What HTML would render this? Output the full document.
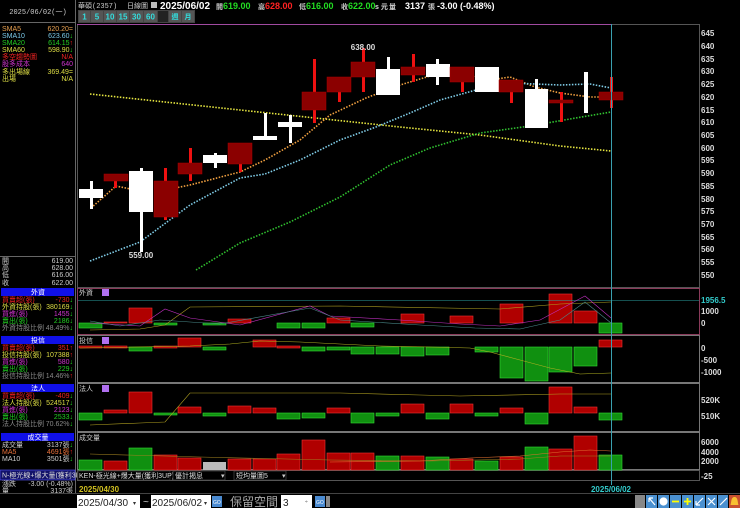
<!DOCTYPE html>
<html><head><meta charset="utf-8"><style>
html,body{margin:0;padding:0;background:#000;width:740px;height:508px;overflow:hidden}
svg{display:block}
text{font-family:"Liberation Sans","Noto Sans CJK TC",sans-serif}
.s{font-size:7px}
.m{font-family:"Liberation Mono","Noto Sans CJK TC",monospace;font-size:7px}
.ax{font-family:"DejaVu Sans","Liberation Sans",sans-serif;font-size:8px;fill:#ddd;font-weight:bold}
</style></head><body>
<svg width="740" height="508" viewBox="0 0 740 508" xmlns="http://www.w3.org/2000/svg">
<rect width="740" height="508" fill="#000"/>
<!-- left panel separators -->
<line x1="75.5" y1="0" x2="75.5" y2="493" stroke="#666"/>
<line x1="0" y1="22.5" x2="75" y2="22.5" stroke="#666"/>
<text x="38" y="14" class="m" fill="#ccc" text-anchor="middle">2025/06/02(一)</text>
<!-- SMA list -->
<g class="m">
<text x="2" y="31" fill="#e8a050">SMA5</text><text x="73" y="31" fill="#e8a050" text-anchor="end">620.20=</text>
<text x="2" y="38" fill="#7ac8e8">SMA10</text><text x="73" y="38" fill="#7ac8e8" text-anchor="end">623.60<tspan fill="#2d2">↓</tspan></text>
<text x="2" y="45" fill="#2c2">SMA20</text><text x="73" y="45" fill="#2c2" text-anchor="end">614.15<tspan fill="#e22">↑</tspan></text>
<text x="2" y="52" fill="#dd4">SMA60</text><text x="73" y="52" fill="#dd4" text-anchor="end">598.90<tspan fill="#2d2">↓</tspan></text>
<text x="2" y="59" fill="#e22">多空趨勢圖</text><text x="73" y="59" fill="#e22" text-anchor="end">N/A</text>
<text x="2" y="66" fill="#c3c">股多成本</text><text x="73" y="66" fill="#c3c" text-anchor="end">640</text>
<text x="2" y="74" fill="#dd4">多出場線</text><text x="73" y="74" fill="#dd4" text-anchor="end">369.49=</text>
<text x="2" y="81" fill="#dd4">出場</text><text x="73" y="81" fill="#dd4" text-anchor="end">N/A</text>
</g>
<line x1="0" y1="256.5" x2="75" y2="256.5" stroke="#666"/>
<g class="m" fill="#ccc">
<text x="2" y="263">開</text><text x="73" y="263" text-anchor="end">619.00</text>
<text x="2" y="270">高</text><text x="73" y="270" text-anchor="end">628.00</text>
<text x="2" y="277">低</text><text x="73" y="277" text-anchor="end">616.00</text>
<text x="2" y="285">收</text><text x="73" y="285" text-anchor="end">622.00</text>
</g>
<!-- left panel sections -->
<g class="m">
<rect x="1" y="288" width="73" height="8" fill="#1010e8"/><text x="38" y="294.5" fill="#fff" text-anchor="middle">外資</text>
<text x="2" y="302" fill="#e22">買賣超(張)</text><text x="73" y="302" fill="#e22" text-anchor="end">-730<tspan fill="#2d2">↓</tspan></text>
<text x="2" y="309" fill="#dd4">外資持股(張)</text><text x="73" y="309" fill="#dd4" text-anchor="end">380169<tspan fill="#2d2">↓</tspan></text>
<text x="2" y="316" fill="#c3c">買進(張)</text><text x="73" y="316" fill="#c3c" text-anchor="end">1455<tspan fill="#2d2">↓</tspan></text>
<text x="2" y="323" fill="#2c2">賣出(張)</text><text x="73" y="323" fill="#2c2" text-anchor="end">2186<tspan fill="#2d2">↓</tspan></text>
<text x="2" y="330" fill="#888">外資持股比例</text><text x="73" y="330" fill="#888" text-anchor="end">48.49%<tspan fill="#2d2">↓</tspan></text>
<rect x="1" y="336" width="73" height="8" fill="#1010e8"/><text x="38" y="342.5" fill="#fff" text-anchor="middle">投信</text>
<text x="2" y="350" fill="#e22">買賣超(張)</text><text x="73" y="350" fill="#e22" text-anchor="end">351<tspan fill="#e22">↑</tspan></text>
<text x="2" y="357" fill="#dd4">投信持股(張)</text><text x="73" y="357" fill="#dd4" text-anchor="end">107388<tspan fill="#e22">↑</tspan></text>
<text x="2" y="364" fill="#c3c">買進(張)</text><text x="73" y="364" fill="#c3c" text-anchor="end">580<tspan fill="#2d2">↓</tspan></text>
<text x="2" y="371" fill="#2c2">賣出(張)</text><text x="73" y="371" fill="#2c2" text-anchor="end">229<tspan fill="#2d2">↓</tspan></text>
<text x="2" y="378" fill="#888">投信持股比例</text><text x="73" y="378" fill="#888" text-anchor="end">14.46%<tspan fill="#e22">↑</tspan></text>
<rect x="1" y="384" width="73" height="8" fill="#1010e8"/><text x="38" y="390.5" fill="#fff" text-anchor="middle">法人</text>
<text x="2" y="398" fill="#e22">買賣超(張)</text><text x="73" y="398" fill="#e22" text-anchor="end">-409<tspan fill="#2d2">↓</tspan></text>
<text x="2" y="405" fill="#dd4">法人持股(張)</text><text x="73" y="405" fill="#dd4" text-anchor="end">524517<tspan fill="#2d2">↓</tspan></text>
<text x="2" y="412" fill="#c3c">買進(張)</text><text x="73" y="412" fill="#c3c" text-anchor="end">2123<tspan fill="#2d2">↓</tspan></text>
<text x="2" y="419" fill="#2c2">賣出(張)</text><text x="73" y="419" fill="#2c2" text-anchor="end">2533<tspan fill="#2d2">↓</tspan></text>
<text x="2" y="426" fill="#888">法人持股比例</text><text x="73" y="426" fill="#888" text-anchor="end">70.62%<tspan fill="#2d2">↓</tspan></text>
<rect x="1" y="433" width="73" height="8" fill="#1010e8"/><text x="38" y="439.5" fill="#fff" text-anchor="middle">成交量</text>
<text x="2" y="447" fill="#ccc">成交量</text><text x="73" y="447" fill="#ccc" text-anchor="end">3137張<tspan fill="#2d2">↓</tspan></text>
<text x="2" y="454" fill="#e8703a">MA5</text><text x="73" y="454" fill="#e8703a" text-anchor="end">4691張<tspan fill="#e22">↑</tspan></text>
<text x="2" y="461" fill="#ccc">MA10</text><text x="73" y="461" fill="#ccc" text-anchor="end">3501張<tspan fill="#2d2">↓</tspan></text>
<rect x="0" y="470" width="75" height="10" fill="#12126a" stroke="#5a5aff" stroke-width="0.6"/><text x="2" y="477.5" fill="#ddd">N-極光線+爆大量(獲利3D)</text>
<text x="2" y="486" fill="#ccc">漲跌</text><text x="73" y="486" fill="#ccc" text-anchor="end">-3.00 (-0.48%)</text>
<text x="2" y="493" fill="#ccc">量</text><text x="73" y="493" fill="#ccc" text-anchor="end">3137張</text>
</g>
<!-- header -->
<g>
<text x="78" y="8" class="m" fill="#ccc">華碩(2357)</text>
<text x="127" y="8" class="m" fill="#ccc">日線圖</text>
<rect x="151" y="2" width="6" height="6" fill="#bbb"/>
<text x="160" y="9" fill="#fff" font-size="10" font-weight="bold">2025/06/02</text>
<g font-size="9" font-weight="bold">
<text x="216" y="9" class="m" fill="#ccc">開</text><text x="223" y="9" fill="#2d2">619.00</text>
<text x="258" y="9" class="m" fill="#ccc">高</text><text x="265" y="9" fill="#f22">628.00</text>
<text x="299" y="9" class="m" fill="#ccc">低</text><text x="306" y="9" fill="#2d2">616.00</text>
<text x="341" y="9" class="m" fill="#ccc">收</text><text x="348" y="9" fill="#2d2">622.00</text>
<text x="375" y="9" fill="#ddd" font-size="7">s 元</text>
<text x="389" y="9" class="m" fill="#ccc">量</text><text x="405" y="9" fill="#fff">3137</text>
<text x="428" y="9" class="m" fill="#ccc">張</text><text x="437" y="9" fill="#fff">-3.00 (-0.48%)</text>
</g>
</g>
<!-- toolbar -->
<rect x="78" y="10" width="117" height="13" fill="#444"/>
<g font-size="8" fill="#3dd" font-weight="bold" text-anchor="middle">
<rect x="79" y="11" width="11" height="11" fill="#555"/><text x="84.5" y="19.5">1</text>
<rect x="91" y="11" width="12" height="11" fill="#555"/><text x="97" y="19.5">5</text>
<rect x="104" y="11" width="12" height="11" fill="#555"/><text x="110" y="19.5">10</text>
<rect x="117" y="11" width="12" height="11" fill="#555"/><text x="123" y="19.5">15</text>
<rect x="130" y="11" width="13" height="11" fill="#555"/><text x="136.5" y="19.5">30</text>
<rect x="144" y="11" width="13" height="11" fill="#555"/><text x="150.5" y="19.5">60</text>
<rect x="158" y="11" width="10" height="11" fill="#222"/>
<rect x="169" y="11" width="12" height="11" fill="#555"/><text x="175" y="19" font-size="6" class="m">週</text>
<rect x="182" y="11" width="12" height="11" fill="#555"/><text x="188" y="19" font-size="6" class="m">月</text>
</g>
<!-- main chart frame -->
<rect x="77.5" y="24.5" width="622" height="263" fill="none" stroke="#555"/>
<line x1="77" y1="24.5" x2="611" y2="24.5" stroke="#a04aa0"/>
<!-- axis labels -->
<g class="ax">
<text x="701" y="36">645</text><text x="701" y="49">640</text><text x="701" y="62">635</text><text x="701" y="74">630</text>
<text x="701" y="87">625</text><text x="701" y="100">620</text><text x="701" y="113">615</text><text x="701" y="125">610</text>
<text x="701" y="138">605</text><text x="701" y="151">600</text><text x="701" y="163">595</text><text x="701" y="176">590</text>
<text x="701" y="189">585</text><text x="701" y="202">580</text><text x="701" y="214">575</text><text x="701" y="227">570</text>
<text x="701" y="240">565</text><text x="701" y="252">560</text><text x="701" y="265">555</text><text x="701" y="278">550</text>
</g>
<!-- MA lines -->
<g fill="none" stroke-width="1.6" stroke-dasharray="1.5 1.5">
<polyline stroke="#e6e640" points="90,94 240,110 400,127 480,135 560,146 611,151"/>
<polyline stroke="#f0a040" points="91,208 116,186 140,191 165,190 190,185 240,172 265,160 300,140 330,115 366,98 400,85 430,76 462,73 490,80 510,77 535,87 560,93 590,97 611,97"/>
<polyline stroke="#80cde8" points="90,261 140,242 190,205 240,178 265,174 300,160 340,140 376,127 410,113 440,100 476,90 510,83 560,85 590,84 611,88"/>
<polyline stroke="#30c030" points="196,270 240,243 290,222 340,197 390,165 430,148 480,133 530,126 570,119 611,112"/>
</g>
<!-- candles -->
<g>
<!-- white -->
<g fill="#fff">
<rect x="90" y="181" width="3" height="28"/><rect x="79" y="189" width="24" height="9"/>
<rect x="140" y="168" width="3" height="84"/><rect x="129" y="171" width="24" height="41"/>
<rect x="214" y="153" width="3" height="15"/><rect x="203" y="155" width="24" height="8"/>
<rect x="264" y="113" width="3" height="27"/><rect x="253" y="136" width="24" height="4"/>
<rect x="289" y="115" width="3" height="28"/><rect x="278" y="122" width="24" height="5"/>
<rect x="387" y="57" width="3" height="38"/><rect x="376" y="69" width="24" height="26"/>
<rect x="436" y="59" width="3" height="26"/><rect x="426" y="64" width="24" height="13"/>
<rect x="475" y="67" width="24" height="25"/>
<rect x="535" y="79" width="3" height="12"/><rect x="525" y="89" width="23" height="39"/>
<rect x="584" y="72" width="4" height="41"/>
</g>
<g fill="#ee1111">
<rect x="114" y="174" width="3" height="14"/>
<rect x="164" y="168" width="3" height="52"/>
<rect x="189" y="148" width="3" height="33"/>
<rect x="239" y="143" width="3" height="29"/>
<rect x="313" y="59" width="3" height="64"/>
<rect x="338" y="77" width="3" height="25"/>
<rect x="362" y="48" width="3" height="44"/>
<rect x="412" y="54" width="3" height="28"/>
<rect x="461" y="67" width="3" height="25"/>
<rect x="510" y="80" width="3" height="23"/>
<rect x="560" y="92" width="3" height="30"/>
<rect x="610" y="77" width="3" height="31"/>
</g>
<g fill="#8b0000" stroke="#a00" stroke-width="0.5">
<rect x="104" y="174" width="24" height="7"/>
<rect x="154" y="181" width="24" height="36"/>
<rect x="178" y="163" width="24" height="11"/>
<rect x="228" y="143" width="24" height="21"/>
<rect x="302" y="92" width="24" height="18"/>
<rect x="327" y="77" width="24" height="15"/>
<rect x="351" y="62" width="24" height="15"/>
<rect x="401" y="67" width="24" height="8"/>
<rect x="450" y="67" width="24" height="15"/>
<rect x="499" y="80" width="24" height="12"/>
<rect x="549" y="100" width="24" height="3"/>
<rect x="599" y="92" width="24" height="8"/>
</g>
<text x="363" y="50" text-anchor="middle" fill="#ddd" font-size="8" font-weight="bold">638.00</text>
<text x="141" y="258" text-anchor="middle" fill="#ddd" font-size="8" font-weight="bold">559.00</text>
</g>
<!-- sub panels frames -->
<g fill="none" stroke="#777">
<rect x="77.5" y="288.5" width="622" height="46" stroke="#8a3a5a"/>
<rect x="77.5" y="335.5" width="622" height="47"/>
<rect x="77.5" y="383.5" width="622" height="48"/>
<rect x="77.5" y="432.5" width="622" height="37"/>
<rect x="77.5" y="470.5" width="622" height="10" stroke="#555"/>
</g>
<g class="m" fill="#ccc">
<text x="79" y="295">外資</text><text x="79" y="343">投信</text><text x="79" y="391">法人</text><text x="79" y="440">成交量</text>
</g>
<g fill="#b070f0"><rect x="102" y="289" width="7" height="7"/><rect x="102" y="337" width="7" height="7"/><rect x="102" y="385" width="7" height="7"/></g>
<!-- panel 1 bars -->
<g stroke-width="0.6">
<g fill="#b00000" stroke="#e33">
<rect x="104" y="322" width="23" height="1"/><rect x="129" y="308" width="23" height="15"/><rect x="228" y="319" width="23" height="4"/>
<rect x="327" y="318" width="23" height="5"/><rect x="401" y="314" width="23" height="9"/><rect x="450" y="316" width="23" height="7"/>
<rect x="500" y="304" width="23" height="19"/><rect x="549" y="294" width="23" height="29"/><rect x="574" y="311" width="23" height="12"/>
</g>
<g fill="#109010" stroke="#3d3">
<rect x="79" y="323" width="23" height="5"/><rect x="154" y="323" width="23" height="2"/><rect x="203" y="323" width="23" height="2"/>
<rect x="277" y="323" width="23" height="5"/><rect x="302" y="323" width="23" height="5"/><rect x="351" y="323" width="23" height="4"/>
<rect x="599" y="323" width="23" height="10"/>
</g>
<line x1="78" y1="300.5" x2="699" y2="300.5" stroke="#2aa0a0"/>
<polyline fill="none" stroke="#b0a020" points="90,330 140,329 165,325 190,307 340,306 500,309 560,304 611,302"/>
<polyline fill="none" stroke="#c030c0" points="90,323 140,326 165,309 190,318 240,325 310,306 330,316 400,320 460,324 500,326 540,320 585,296 611,318"/>
<polyline fill="none" stroke="#4a8a8a" points="90,321 120,326 160,320 220,324 310,308 340,320 420,325 475,328 520,329 560,320 585,302 611,323"/>
</g>
<!-- panel 2 bars -->
<g stroke-width="0.6">
<g fill="#b00000" stroke="#e33">
<rect x="79" y="346" width="23" height="2"/><rect x="104" y="346" width="23" height="2"/><rect x="154" y="346" width="23" height="2"/>
<rect x="178" y="338" width="23" height="9"/><rect x="253" y="340" width="23" height="7"/><rect x="277" y="346" width="23" height="2"/>
<rect x="599" y="340" width="23" height="7"/>
</g>
<g fill="#109010" stroke="#3d3">
<rect x="129" y="347" width="23" height="4"/><rect x="203" y="347" width="23" height="3"/><rect x="302" y="347" width="23" height="4"/>
<rect x="327" y="347" width="23" height="3"/><rect x="351" y="347" width="23" height="7"/><rect x="376" y="347" width="23" height="7"/>
<rect x="401" y="347" width="23" height="9"/><rect x="426" y="347" width="23" height="8"/><rect x="475" y="347" width="23" height="5"/>
<rect x="500" y="347" width="23" height="31"/><rect x="525" y="347" width="23" height="34"/><rect x="549" y="347" width="23" height="25"/>
<rect x="574" y="347" width="23" height="19"/>
</g>
<polyline fill="none" stroke="#b0b020" points="80,348 190,346 230,344 260,341 300,342 340,344 380,346 430,347 470,348 490,352 520,360 550,368 580,374 611,373"/>
</g>
<!-- panel 3 bars -->
<g stroke-width="0.6">
<g fill="#b00000" stroke="#e33">
<rect x="104" y="410" width="23" height="3"/><rect x="129" y="392" width="23" height="21"/><rect x="178" y="407" width="23" height="6"/>
<rect x="228" y="406" width="23" height="7"/><rect x="253" y="408" width="23" height="5"/><rect x="327" y="408" width="23" height="5"/>
<rect x="401" y="404" width="23" height="9"/><rect x="450" y="404" width="23" height="9"/><rect x="500" y="408" width="23" height="5"/>
<rect x="549" y="387" width="23" height="26"/><rect x="574" y="407" width="23" height="6"/>
</g>
<g fill="#109010" stroke="#3d3">
<rect x="79" y="413" width="23" height="7"/><rect x="154" y="413" width="23" height="2"/><rect x="203" y="413" width="23" height="3"/>
<rect x="277" y="413" width="23" height="6"/><rect x="302" y="413" width="23" height="5"/><rect x="351" y="413" width="23" height="10"/>
<rect x="376" y="413" width="23" height="3"/><rect x="426" y="413" width="23" height="6"/><rect x="475" y="413" width="23" height="3"/>
<rect x="525" y="413" width="23" height="11"/><rect x="599" y="413" width="23" height="7"/>
</g>
<polyline fill="none" stroke="#b0a020" points="90,425 140,423 165,422 190,393 340,393 420,395 460,396 560,394 611,394"/>
</g>
<!-- volume bars -->
<g stroke-width="0.6">
<g fill="#b00000" stroke="#e33">
<rect x="104" y="461" width="23" height="9"/><rect x="154" y="455" width="23" height="15"/><rect x="178" y="458" width="23" height="12"/>
<rect x="228" y="459" width="23" height="11"/><rect x="253" y="459" width="23" height="11"/><rect x="277" y="454" width="23" height="16"/>
<rect x="302" y="440" width="23" height="30"/><rect x="327" y="453" width="23" height="17"/><rect x="351" y="453" width="23" height="17"/>
<rect x="401" y="456" width="23" height="14"/><rect x="450" y="459" width="23" height="11"/><rect x="500" y="457" width="23" height="13"/>
<rect x="549" y="449" width="23" height="21"/><rect x="574" y="436" width="23" height="34"/>
</g>
<g fill="#109010" stroke="#3d3">
<rect x="79" y="460" width="23" height="10"/><rect x="129" y="448" width="23" height="22"/><rect x="376" y="456" width="23" height="14"/>
<rect x="426" y="457" width="23" height="13"/><rect x="475" y="461" width="23" height="9"/><rect x="525" y="447" width="23" height="23"/>
<rect x="599" y="455" width="23" height="15"/>
</g>
<rect x="203" y="462" width="23" height="8" fill="#bbb"/>
<polyline fill="none" stroke="#a08020" points="90,454 200,457 330,460 430,461 520,459 560,456 611,456"/>
<polyline fill="none" stroke="#e07030" points="330,462 420,461 470,458 520,456 560,452 590,450 611,451"/>
</g>
<!-- crosshair -->
<line x1="611.5" y1="24" x2="611.5" y2="485" stroke="#3aa0b0"/>
<!-- right axis sub labels -->
<g class="ax">
<text x="701" y="303" fill="#3cc">1956.5</text><text x="701" y="314">1000</text><text x="701" y="326">0</text>
<text x="701" y="351">0</text><text x="701" y="363">-500</text><text x="701" y="375">-1000</text>
<text x="701" y="403">520K</text><text x="701" y="419">510K</text>
<text x="701" y="445">6000</text><text x="701" y="455">4000</text><text x="701" y="464">2000</text>
<text x="701" y="479">-25</text>
</g>
<!-- bottom selectors row -->
<g class="m">
<rect x="78" y="471" width="92" height="9" fill="#000" stroke="#444" stroke-width="0.6"/><text x="79" y="478" fill="#ddd">KEN-極光線+爆大量(獲利3UP)</text>
<rect x="173" y="471" width="52" height="9" fill="#000" stroke="#555" stroke-width="0.6"/><text x="175" y="478" fill="#ddd">優計揭息</text><text x="221" y="478" fill="#ccc">▾</text>
<rect x="234" y="471" width="52" height="9" fill="#000" stroke="#555" stroke-width="0.6"/><text x="236" y="478" fill="#ddd">短均量圖5</text><text x="282" y="478" fill="#ccc">▾</text>
</g>
<text x="79" y="492" fill="#d0c020" font-size="8" font-weight="bold">2025/04/30</text>
<text x="611" y="492" fill="#3cc" font-size="8" font-weight="bold" text-anchor="middle">2025/06/02</text>
<line x1="0" y1="493.5" x2="740" y2="493.5" stroke="#444"/>
<!-- inputs -->
<rect x="77" y="495" width="63" height="13" fill="#fff"/><text x="78" y="506" font-size="10" fill="#222">2025/04/30</text>
<text x="133" y="505" font-size="6" fill="#333">▾</text>
<text x="143" y="505" font-size="10" fill="#ccc">~</text>
<rect x="151" y="495" width="60" height="13" fill="#fff"/><text x="152" y="506" font-size="10" fill="#222">2025/06/02</text>
<text x="204" y="505" font-size="6" fill="#333">▾</text>
<rect x="212" y="496" width="10" height="11" fill="#4a8ad0"/><text x="213" y="504" font-size="5" fill="#fff">GO</text>
<text x="230" y="506" font-size="12" fill="#aaa" font-family="Noto Sans CJK TC,sans-serif">保留空間</text>
<rect x="281" y="495" width="31" height="13" fill="#fff"/><text x="283" y="506" font-size="10" fill="#222">3</text>
<text x="305" y="503" font-size="5" fill="#555">÷</text>
<rect x="315" y="496" width="10" height="11" fill="#4a8ad0"/><text x="316" y="504" font-size="5" fill="#fff">GO</text>
<rect x="326" y="496" width="4" height="11" fill="#888"/>
<!-- right icons -->
<rect x="635" y="495" width="10" height="13" fill="#888"/>
<g fill="#4a90d0">
<rect x="646" y="495" width="11" height="13"/><rect x="658" y="495" width="11" height="13"/><rect x="670" y="495" width="11" height="13"/>
<rect x="682" y="495" width="11" height="13"/><rect x="694" y="495" width="11" height="13"/><rect x="706" y="495" width="11" height="13"/>
<rect x="718" y="495" width="10" height="13"/>
</g>
<rect x="729" y="495" width="11" height="13" fill="#c85030"/>
<g stroke="#fff" stroke-width="1.2" fill="none">
<path d="M649 498 L655 505 M649 498 L649 502 M649 498 L653 498"/>
<circle cx="663.5" cy="501.5" r="3.5" fill="#fff"/>
<path d="M672 501.5 H679" stroke="#ff0" stroke-width="1.8"/>
<path d="M684 501.5 H691 M687.5 498 V505" stroke="#ff0" stroke-width="1.8"/>
<path d="M696 505 L703 498 M696 505 V501 M696 505 H700"/>
<path d="M708 498 L715 505 M715 498 L708 505"/>
<path d="M720 505 L727 498"/>
</g>
<path d="M734.5 497 C731 497 731.5 502 730.5 505 H738.5 C737.5 502 738 497 734.5 497 Z" fill="#f8c030"/>
</svg>
</body></html>
